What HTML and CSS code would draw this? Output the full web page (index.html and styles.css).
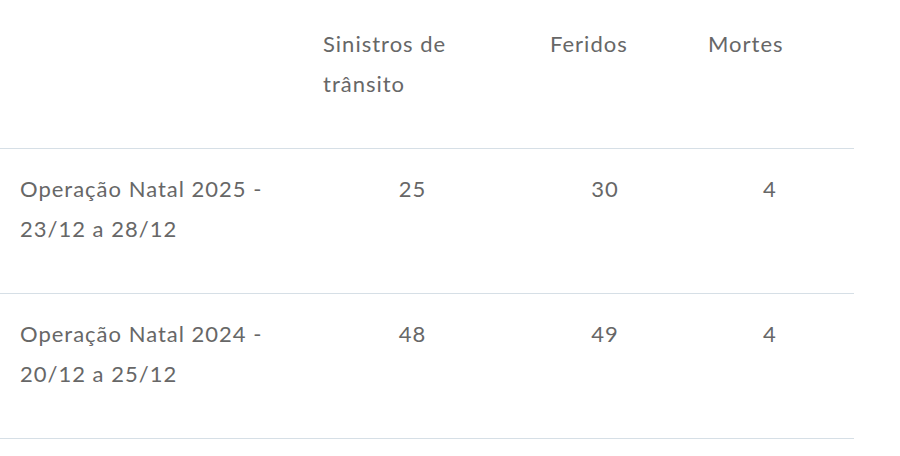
FILE: index.html
```html
<!DOCTYPE html>
<html lang="pt">
<head>
<meta charset="utf-8">
<link rel="stylesheet" href="styles.css">
</head>
<body>
<table class="stats">
  <colgroup>
    <col class="c1"><col class="c2"><col class="c3"><col class="c4">
  </colgroup>
  <thead>
    <tr>
      <th></th>
      <th>Sinistros de trânsito</th>
      <th>Feridos</th>
      <th>Mortes</th>
    </tr>
  </thead>
  <tbody>
    <tr>
      <td class="label">Operação Natal 2025 - 23/12 a 28/12</td>
      <td class="num">25</td>
      <td class="num">30</td>
      <td class="num last">4</td>
    </tr>
    <tr>
      <td class="label">Operação Natal 2024 - 20/12 a 25/12</td>
      <td class="num">48</td>
      <td class="num">49</td>
      <td class="num last">4</td>
    </tr>
  </tbody>
</table>
</body>
</html>
```
FILE: styles.css
```css
html, body {
  margin: 0;
  padding: 0;
  background: #ffffff;
}
body {
  font-family: Lato, "Open Sans", sans-serif;
  font-size: 22px;
  letter-spacing: 1px;
  line-height: 40px;
  color: #676767;
}
.stats {
  border-collapse: collapse;
  width: 854px;
  table-layout: fixed;
}
.c1 { width: 303px; }
.c2 { width: 227px; }
.c3 { width: 158px; }
.c4 { width: 166px; }
.stats th,
.stats td {
  padding: 20px 28px 44px 20px;
  vertical-align: top;
  font-weight: 400;
  text-align: left;
  border-bottom: 1px solid #d6dfe6;
}
.stats thead th {
  padding-top: 24px;
}
.stats td.num {
  text-align: center;
}
.stats td.last {
  padding-right: 22px;
}
```
